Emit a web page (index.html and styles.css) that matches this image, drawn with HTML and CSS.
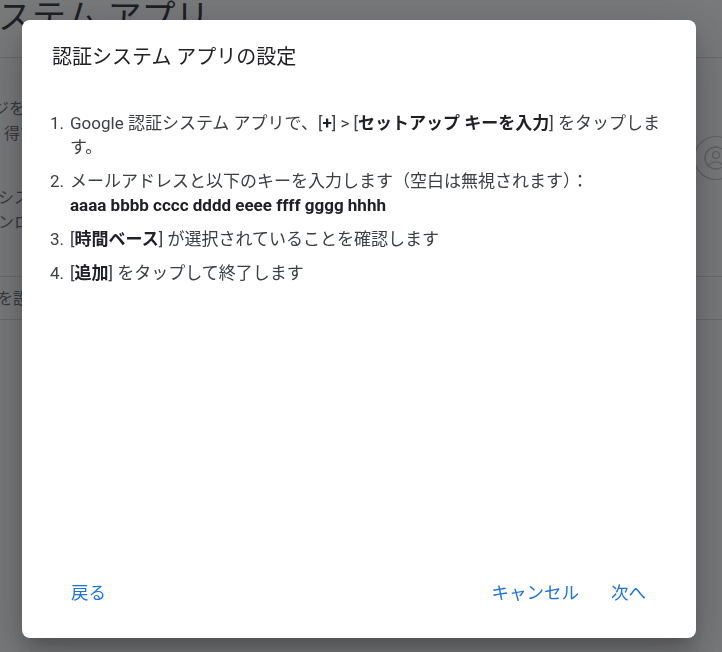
FILE: index.html
```html
<!DOCTYPE html>
<html lang="ja">
<head>
<meta charset="utf-8">
<title>認証システム アプリの設定</title>
<link rel="stylesheet" href="styles.css">
</head>
<body>
<div class="page">
  <header class="page-header">
    <h1 class="page-title">ステム アプリ</h1>
  </header>
  <section class="page-section">
    <div class="section-text">
      <p class="bg-para">
        <span class="bg-line shift-a">ジを受け取る代わりに、認証システム アプリから確認コードを取</span>
        <span class="bg-line shift-b">得できます。スマートフォンがオフラインの場合でも利用できます。</span>
      </p>
      <p class="bg-para">
        <span class="bg-line shift-c">システム アプリをまだお持ちでない場合は、Google Play ストアからダウ</span>
        <span class="bg-line shift-c">ンロードしてください。</span>
      </p>
    </div>
    <svg class="bg-icon" viewBox="0 0 50 50" aria-hidden="true">
      <circle cx="25" cy="25" r="21.5" fill="none" stroke="#c4c6c9" stroke-width="1.2"/>
      <circle cx="25" cy="25" r="11" fill="none" stroke="#bfc1c4" stroke-width="1.4"/>
      <circle cx="25" cy="22" r="3.4" fill="none" stroke="#bfc1c4" stroke-width="1.4"/>
      <path d="M17.8 32.5c1.8-2.4 4.4-3.6 7.2-3.6s5.4 1.2 7.2 3.6" fill="none" stroke="#bfc1c4" stroke-width="1.4"/>
    </svg>
  </section>
  <div class="page-row"><span class="bg-line shift-d">を設定</span></div>
</div>

<div class="overlay">
  <div class="dialog" role="dialog" aria-labelledby="dlg-title">
    <h2 class="dialog-title" id="dlg-title">認証システム アプリの設定</h2>
    <div class="dialog-body">
      <div class="step">
        <span class="step-num">1.</span>
        <span class="step-text">Google 認証システム アプリで、[<b>+</b>] &gt; [<b>セットアップ キーを入力</b>] をタップします。</span>
      </div>
      <div class="step">
        <span class="step-num">2.</span>
        <span class="step-text">メールアドレスと以下のキーを入力します（空白は無視されます）：<br><b>aaaa bbbb cccc dddd eeee ffff gggg hhhh</b></span>
      </div>
      <div class="step">
        <span class="step-num">3.</span>
        <span class="step-text">[<b>時間ベース</b>] が選択されていることを確認します</span>
      </div>
      <div class="step">
        <span class="step-num">4.</span>
        <span class="step-text">[<b>追加</b>] をタップして終了します</span>
      </div>
    </div>
    <div class="dialog-actions">
      <button class="text-btn" type="button">戻る</button>
      <button class="text-btn push" type="button">キャンセル</button>
      <button class="text-btn" type="button">次へ</button>
    </div>
  </div>
</div>
</body>
</html>
```
FILE: styles.css
```css
html, body {
  margin: 0;
  padding: 0;
}

body {
  font-family: Roboto, "Noto Sans CJK JP", sans-serif;
  background: #ffffff;
  color: #202124;
  width: 722px;
  height: 652px;
  overflow: hidden;
}

/* ---------- background page ---------- */
.page {
  width: 722px;
  height: 652px;
  overflow: hidden;
  background: #ffffff;
}

.page-header {
  height: 57px;
  border-bottom: 1px solid #dadce0;
  overflow: hidden;
}

.page-title {
  margin: -3px 0 0 -2px;
  font-size: 34px;
  line-height: 40px;
  font-weight: 400;
  color: #202124;
  white-space: nowrap;
}

.page-section {
  display: flex;
  justify-content: space-between;
  align-items: flex-start;
  padding: 38px 0 41px;
  border-bottom: 1px solid #dadce0;
}

.section-text {
  display: flex;
  flex-direction: column;
  gap: 39px;
}

.bg-para {
  margin: 0;
  display: flex;
  flex-direction: column;
}

.bg-line {
  display: block;
  font-size: 16px;
  line-height: 25px;
  color: #5f6368;
  white-space: nowrap;
}

.shift-a { margin-left: -7px; }
.shift-b { margin-left: 4px; }
.shift-c { margin-left: -2px; }
.shift-d { margin-left: -3px; }

.bg-icon {
  width: 50px;
  height: 50px;
  margin-top: 37px;
  margin-right: -19px;
  flex: none;
}

.page-row {
  height: 42px;
  display: flex;
  align-items: center;
  border-bottom: 1px solid #dadce0;
}

/* ---------- overlay + dialog ---------- */
.overlay {
  position: fixed;
  inset: 0;
  background: rgba(32, 33, 36, 0.6);
  display: flex;
  padding: 20px 26px 14px 22px;
  box-sizing: border-box;
}

.dialog {
  flex: 1;
  display: flex;
  flex-direction: column;
  background: #ffffff;
  border-radius: 8px;
  box-shadow: 0 11px 15px -7px rgba(0, 0, 0, 0.2),
              0 24px 38px 3px rgba(0, 0, 0, 0.14),
              0 9px 46px 8px rgba(0, 0, 0, 0.12);
}

.dialog-title {
  margin: 0;
  padding: 23px 30px 0 30px;
  font-size: 20px;
  line-height: 28px;
  font-weight: 400;
  color: #202124;
}

.dialog-body {
  flex: 1;
  padding: 40px 16px 0 28px;
}

.step {
  display: flex;
  font-size: 17px;
  line-height: 24px;
  color: #3c4043;
  margin-bottom: 10px;
}

.step-num {
  flex: none;
  width: 20px;
  white-space: nowrap;
}

.step-text {
  flex: 1;
}

.step-text b {
  font-weight: 700;
  color: #202124;
}

.dialog-actions {
  display: flex;
  align-items: center;
  gap: 12px;
  padding: 0 40px 24px 39px;
}

.text-btn {
  height: 45px;
  padding: 0 10px;
  border: none;
  background: none;
  font-family: Roboto, "Noto Sans CJK JP", sans-serif;
  font-size: 17.5px;
  font-weight: 400;
  color: #1a73e8;
  cursor: pointer;
}

.push {
  margin-left: auto;
}
```
